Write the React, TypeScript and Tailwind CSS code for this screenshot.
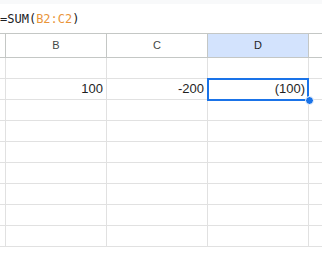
import React from 'react';

const cols = ['B', 'C', 'D'];

function Cell({ value, selected }: { value?: string; selected?: boolean }) {
  return (
    <div className="relative w-[101px] h-full shrink-0 border-r border-[#e1e1e1] flex items-center justify-end pr-[3px] text-[13px] text-[#1f1f1f]">
      {value}
      {selected && (
        <>
          <div className="absolute z-10 left-[-1px] top-[-1px] w-[102px] h-[23px] border-2 border-[#1a73e8]" />
          <div className="absolute z-20 right-[-6px] bottom-[-6px] w-[9px] h-[9px] rounded-full bg-[#1a73e8] border border-white" />
        </>
      )}
    </div>
  );
}

export default function App() {
  const rows = Array.from({ length: 9 }, (_, i) => i);

  return (
    <div className="w-[322px] h-[254px] overflow-hidden bg-white" style={{ fontFamily: '"Liberation Sans", Arial, sans-serif' }}>
      <div className="h-[4px] bg-[#f8f9fa]" />

      {/* Formula bar */}
      <div className="h-[29px] flex items-center text-[12px] text-[#202124] pt-[1px]" style={{ fontFamily: '"DejaVu Sans Mono", "Liberation Mono", monospace' }}>
        <span>=SUM(</span>
        <span className="text-[#e9953a]">B2:C2</span>
        <span>)</span>
      </div>

      {/* Column headers */}
      <div className="h-[25px] flex border-t border-b border-[#c4c7c5] text-[11px] text-[#444746]">
        <div className="w-[6px] shrink-0 border-r border-[#c4c7c5]" />
        {cols.map((c) => (
          <div
            key={c}
            className={`w-[101px] shrink-0 border-r border-[#c4c7c5] flex items-center justify-center ${c === 'D' ? 'bg-[#d3e3fd] text-[#1f1f1f]' : ''}`}
          >
            {c}
          </div>
        ))}
        <div className="flex-1" />
      </div>

      {/* Rows */}
      {rows.map((r) => (
        <div key={r} className="h-[21px] flex border-b border-[#e1e1e1]">
          <div className="w-[6px] shrink-0 border-r border-[#e1e1e1]" />
          <Cell value={r === 1 ? '100' : undefined} />
          <Cell value={r === 1 ? '-200' : undefined} />
          <Cell value={r === 1 ? '(100)' : undefined} selected={r === 1} />
          <div className="flex-1" />
        </div>
      ))}
    </div>
  );
}
